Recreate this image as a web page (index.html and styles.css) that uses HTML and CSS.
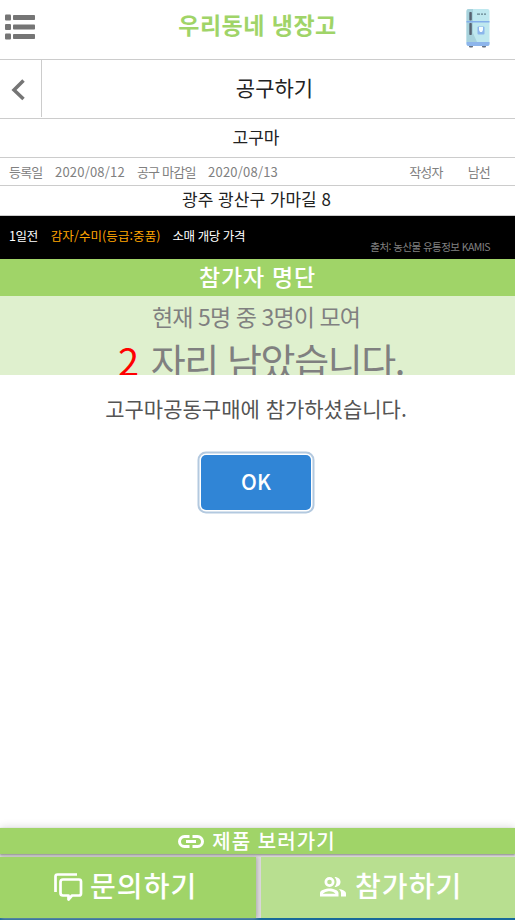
FILE: index.html
```html
<!DOCTYPE html>
<html lang="ko">
<head>
<meta charset="utf-8">
<title>우리동네 냉장고</title>
<link rel="stylesheet" href="styles.css">
</head>
<body>
<header class="topbar">
  <svg class="menu-icon" width="30" height="26" viewBox="0 0 30 26" fill="#757575">
    <rect x="0" y="0.5" width="6" height="6" rx="1"/><rect x="8" y="1" width="22" height="5" rx=".8"/>
    <rect x="0" y="10" width="6" height="6" rx="1"/><rect x="8" y="10.500" width="22" height="5" rx=".8"/>
    <rect x="0" y="19.500" width="6" height="6" rx="1"/><rect x="8" y="20" width="22" height="5" rx=".8"/>
  </svg>
  <h1 class="brand">우리동네 냉장고</h1>
  <svg class="fridge-icon" width="24" height="39" viewBox="0 0 24 39">
    <rect x="3" y="35" width="4" height="3.500" rx="1" fill="#667080"/><rect x="16" y="35" width="4" height="3.500" rx="1" fill="#667080"/>
    <rect x=".5" y="0" width="23" height="37" rx="2" fill="#bfe8ef"/>
    <path d="M2.500 0H7v24l4 9H.5V2a2 2 0 0 1 2-2z" fill="#a7d2dc"/>
    <path d="M.5 33h23v2a2 2 0 0 1-2 2h-19a2 2 0 0 1-2-2z" fill="#8db5eb"/>
    <rect x=".5" y="12" width="23" height="1.500" fill="#83aeea"/>
    <rect x="3.300" y="3" width="2.500" height="8.500" rx=".8" fill="#56616f"/><rect x="3.300" y="14" width="2.500" height="12" rx=".8" fill="#56616f"/>
    <path d="M11 5.200h3m1 0h2m1 0h2" stroke="#66818d" stroke-width="1.300"/>
    <rect x="11.500" y="17.500" width="7" height="8" rx="1" fill="#8bb6ec"/><path d="M13 18h4v3l-1 2h-2l-1-2z" fill="#f3fcff"/>
  </svg>
</header>
<nav class="subbar">
  <a class="back"><svg width="14" height="22" viewBox="0 0 14 22"><path d="M12.500 1.500 3 11l9.500 9" fill="none" stroke="#757575" stroke-width="3.500"/></svg></a>
  <h2 class="page-title">공구하기</h2>
</nav>
<main class="content">
  <div class="product">고구마</div>
  <div class="meta">
    <span class="label">등록일</span><span class="date first">2020/08/12</span>
    <span class="label">공구 마감일</span><span class="date">2020/08/13</span>
    <span class="label writer">작성자</span><span class="label">남선</span>
  </div>
  <div class="address">광주 광산구 가마길 8</div>
  <div class="ticker">
    <span class="day">1일전</span><span class="item">감자/수미(등급:중품)</span><span class="kind">소매 개당 가격</span>
    <span class="source">출처: 농산물 유통정보 KAMIS</span>
  </div>
  <h3 class="members">참가자 명단</h3>
  <section class="status">
    <p class="now">현재 5명 중 3명이 모여</p>
    <p class="left"><span class="count">2</span><span>자리 남았습니다.</span></p>
  </section>
  <section class="dialog">
    <p class="message">고구마공동구매에 참가하셨습니다.</p>
    <button class="ok">OK</button>
  </section>
</main>
<footer class="actions">
  <a class="view"><svg width="26" height="13" viewBox="0 0 26 13" fill="none" stroke="#fff" stroke-width="3"><path d="M11.500 1.500h-5a5 5 0 0 0 0 10h5M14.500 1.500h5a5 5 0 0 1 0 10h-5M8 6.500h10"/></svg><span>제품 보러가기</span></a>
  <div class="pair">
    <a class="ask"><svg width="29" height="29" viewBox="0 0 29 29" fill="none" stroke="#fff" stroke-width="2.700" stroke-linejoin="round"><path d="M23 1.500H3.500Q1.500 1.500 1.500 3.500V19"/><path d="M9 6.500h16q2 0 2 2v12q0 2-2 2h-7L14.500 26.500v-4H9Q6.500 22.500 6.500 20V9Q6.500 6.500 9 6.500z"/></svg><span>문의하기</span></a>
    <a class="join"><svg width="26" height="20" viewBox="0 0 26 20" fill="#fff"><path fill-rule="evenodd" d="M9.500 0a5 5 0 1 1 0 10 5 5 0 0 1 0-10zm0 2.700a2.300 2.300 0 1 0 0 4.600 2.300 2.300 0 0 0 0-4.600zM0 19.500V16c0-3 6-4.500 9.500-4.500S18.500 13 18.500 16v3.500zm3-2.700h12.500C15 15.500 12 14.200 9.500 14.200S3.500 15.500 3 16.800z"/><path d="M14.500 0c8 0 8 10 0 10 2.700-3 2.700-7 0-10zM18.500 12c4 .6 7.500 2 7.500 4.500v3h-5V16c0-1.600-1-3-2.500-4z"/></svg><span>참가하기</span></a>
  </div>
</footer>
</body>
</html>
```
FILE: styles.css
```css
* { box-sizing: border-box; }
body {
  margin: 0;
  height: 920px;
  display: flex;
  flex-direction: column;
  overflow: hidden;
  background: #fff;
  color: #222;
  font-family: "Noto Sans CJK KR", sans-serif;
}
h1, h2, h3, p { margin: 0; font-weight: 400; }
svg { display: block; flex: none; }

.topbar {
  flex: none;
  height: 60px;
  display: grid;
  grid-template-columns: 60px 1fr 60px;
  padding-top: 8px;
  border-bottom: 1px solid #ccc;
}
.menu-icon { margin: 6px 0 0 5px; }
.brand { text-align: center; font-size: 23px; line-height: 32px; font-weight: 700; letter-spacing: .5px; color: #a0d468; }
.fridge-icon { margin: 1px 0 0 11px; }

.subbar { flex: none; height: 59px; display: grid; grid-template-columns: 42px 1fr 8px; border-bottom: 1px solid #ccc; }
.back { height: 57px; padding: 19px 0 0 11px; border-right: 1px solid #ccc; }
.page-title { text-align: center; font-size: 21px; line-height: 54px; }

.content { flex: 1; min-height: 0; }
.product { height: 39px; line-height: 35px; font-size: 17px; text-align: center; padding-right: 3px; border-bottom: 1px solid #ccc; }
.meta { height: 28px; display: flex; line-height: 27px; padding: 0 25px 0 9px; font-size: 13px; color: #808080; border-bottom: 1px solid #ccc; }
.label { letter-spacing: -.8px; }
.date { letter-spacing: .2px; margin-left: 12.5px; }
.date.first { margin-right: 12px; }
.writer { margin-left: auto; margin-right: 25px; }
.address { height: 30px; line-height: 25px; font-size: 17px; text-align: center; padding-right: 2px; border-bottom: 1px solid #ccc; }
.ticker { height: 43px; display: flex; background: #000; color: #fff; padding: 0 25px 0 9px; font-size: 12.5px; line-height: 40px; letter-spacing: -.4px; }
.item { color: #ffa500; margin-left: 13px; letter-spacing: .08px; }
.kind { margin-left: 12px; letter-spacing: -.45px; }
.source { margin-left: auto; padding-top: 11px; font-size: 10.5px; letter-spacing: -.55px; color: #808080; }
.members { height: 37px; line-height: 34px; font-size: 23px; font-weight: 500; text-align: center; letter-spacing: .8px; color: #fff; background: #a0d468; }
.status { height: 79px; overflow: hidden; text-align: center; color: #808080; background: #dff0ce; padding-right: 3px; }
.now { height: 42px; font-size: 23px; line-height: 41px; letter-spacing: -.9px; }
.left { display: flex; justify-content: center; gap: 13px; padding-left: 10px; font-size: 38px; line-height: 44px; letter-spacing: -1.4px; }
.count { color: #f00; }
.dialog { display: flex; flex-direction: column; align-items: center; }
.message { margin: 15px 3px 0 0; font-size: 21px; line-height: 37px; color: #545454; }
.ok {
  width: 110px;
  height: 55px;
  margin: 28px 3px 0 0;
  padding: 0 0 3px;
  border: 0;
  border-radius: 5px;
  background: #3085d6;
  box-shadow: 0 0 0 1.5px #fff, 0 0 0 3.500px #b3c9df;
  color: #fff;
  font: 500 21px/52px "Noto Sans CJK KR", sans-serif;
}

.actions { flex: none; background: #dcd9dc; border-bottom: 2px solid #17699a; box-shadow: 0 -1px 8px rgba(0,0,0,.14); }
.view { height: 26px; display: flex; align-items: center; justify-content: center; gap: 8px; padding-right: 1px; background: #a0d468; color: #fff; font-size: 20px; line-height: 26px; font-weight: 500; letter-spacing: 1.1px; box-shadow: 0 1px 2px #888; }
.pair { display: flex; gap: 5px; padding-top: 3px; }
.pair a { height: 61px; display: flex; color: #fff; font-size: 28px; font-weight: 500; line-height: 57px; letter-spacing: 1.1px; }
.ask { width: 256px; padding-left: 54px; gap: 7px; background: #a0d468; box-shadow: 1px 0 4px #aaa; }
.ask svg { margin-top: 16px; }
.join { flex: 1; padding-left: 59px; gap: 9px; background: #b8df90; }
.join svg { margin-top: 20px; }
```
